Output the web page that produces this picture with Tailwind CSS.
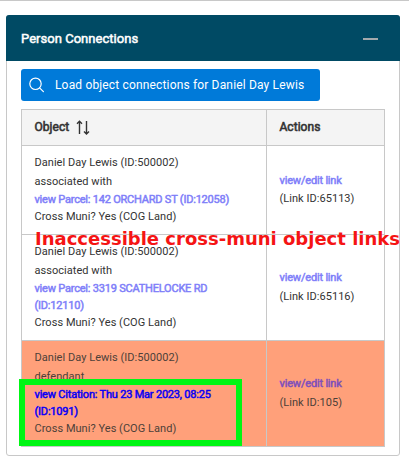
<!DOCTYPE html>
<html lang="en">
<head>
<meta charset="utf-8">
<title>Person Connections</title>
<script src="https://cdn.jsdelivr.net/npm/@tailwindcss/browser@4"></script>
</head>
<body class="bg-white">
<div class="relative h-[468px] w-[409px] overflow-hidden border-t border-[#c8c8c8] pt-[14px] pl-[6px] font-[Roboto,sans-serif] text-[11px] tracking-[0.04px] text-[#333]">
  <section class="h-[441px] w-[394px] rounded-[3px] border border-[#c8c8c8]">
    <header class="-mx-px -mt-px flex h-[46px] items-center justify-between rounded-t-[3px] bg-[#004a64] pr-[22px] pl-[15px]">
      <h2 class="pt-px text-[13px] font-normal tracking-[0.03px] text-white [-webkit-text-stroke:0.5px_white]">Person Connections</h2>
      <span class="mt-[2px] h-[2px] w-[15px] bg-[#a3a9ac]"></span>
    </header>
    <div class="px-[14px] pt-2">
      <button class="flex h-8 w-[299px] items-center rounded-[3px] bg-[#007ad9] pl-2 text-white">
        <svg class="mr-[10px] h-4 w-4 shrink-0" viewBox="0 0 16 16" fill="none" stroke="white" stroke-width="1.2" stroke-linecap="round"><circle cx="6.5" cy="6.8" r="5.7"/><path d="M10.6 10.8l3.8 3.8"/></svg>
        <span class="text-[12px] tracking-[0.16px] whitespace-nowrap">Load object connections for Daniel Day Lewis</span>
      </button>
      <div class="mt-2 grid w-[364px] grid-cols-[245px_118px] grid-rows-[36px_89px_106px_106px] border-t border-l border-[#c8c8c8] whitespace-nowrap *:border-r *:border-b *:border-[#c8c8c8] *:pl-[12.5px]">
        <div class="flex items-center bg-[#f4f4f4] pb-[2px] text-[12px] font-normal [-webkit-text-stroke:0.6px_#333]">Object
          <svg class="mt-[2px] ml-[7px] h-[15px] w-[14px]" viewBox="0 0 14 15" fill="none" stroke="#333" stroke-width="1.4"><path d="M3.5 14V1M1 3.8l2.500-2.500L6 3.800M10.500 1v13M8 11.400l2.500 2.500 2.500-2.500"/></svg>
        </div>
        <div class="flex items-center bg-[#f4f4f4] pb-[2px] text-[12px] font-normal [-webkit-text-stroke:0.6px_#333]">Actions</div>

        <div class="pt-[7px] leading-[17px]">
          <p class="h-[19px] leading-[19px]">Daniel Day Lewis (ID:500002)</p>
          <p class="h-[19px] leading-[19px]">associated with</p>
          <p class="tracking-[-0.21px] text-[#7f7ff9] [-webkit-text-stroke:0.5px_#7f7ff9]">view Parcel: 142 ORCHARD ST (ID:12058)</p>
          <p>Cross Muni? Yes (COG Land)</p>
        </div>
        <div class="flex flex-col justify-center leading-[18px]">
          <p class="tracking-[-0.18px] text-[#7f7ff9] [-webkit-text-stroke:0.5px_#7f7ff9]">view/edit link</p>
          <p>(Link ID:65113)</p>
        </div>

        <div class="pt-[7px] leading-[17px]">
          <p class="h-[19px] leading-[19px]">Daniel Day Lewis (ID:500002)</p>
          <p class="h-[19px] leading-[19px]">associated with</p>
          <p class="tracking-[-0.21px] text-[#7f7ff9] [-webkit-text-stroke:0.5px_#7f7ff9]">view Parcel: 3319 SCATHELOCKE RD<br>(ID:12110)</p>
          <p>Cross Muni? Yes (COG Land)</p>
        </div>
        <div class="flex flex-col justify-center pb-[2px] leading-[19px]">
          <p class="tracking-[-0.18px] text-[#7f7ff9] [-webkit-text-stroke:0.5px_#7f7ff9]">view/edit link</p>
          <p>(Link ID:65116)</p>
        </div>

        <div class="bg-[#ffa07a] pt-[7px] leading-[17px] text-[#4d4039]">
          <p class="h-[19px] leading-[19px]">Daniel Day Lewis (ID:500002)</p>
          <p class="h-[19px] leading-[19px]">defendant</p>
          <p class="tracking-[-0.2px] text-[#0a00f5] [-webkit-text-stroke:0.5px_#0a00f5]">view Citation: Thu 23 Mar 2023, 08:25<br>(ID:1091)</p>
          <p>Cross Muni? Yes (COG Land)</p>
        </div>
        <div class="flex flex-col justify-center bg-[#ffa07a] pb-[2px] leading-[19px] text-[#4d4039]">
          <p class="tracking-[-0.18px] text-[#7f50bb] [-webkit-text-stroke:0.5px_#7f50bb]">view/edit link</p>
          <p>(Link ID:105)</p>
        </div>
      </div>
    </div>
  </section>
  <div class="absolute top-[378px] left-[19px] h-[67px] w-[223px] border-[6px] border-[#00f614]"></div>
  <p class="absolute top-[228px] left-[35px] font-['DejaVu_Sans',sans-serif] text-[18px] leading-5 font-bold tracking-normal whitespace-nowrap text-[#f51414]">Inaccessible cross-muni object links</p>
</div>
</body>
</html>
